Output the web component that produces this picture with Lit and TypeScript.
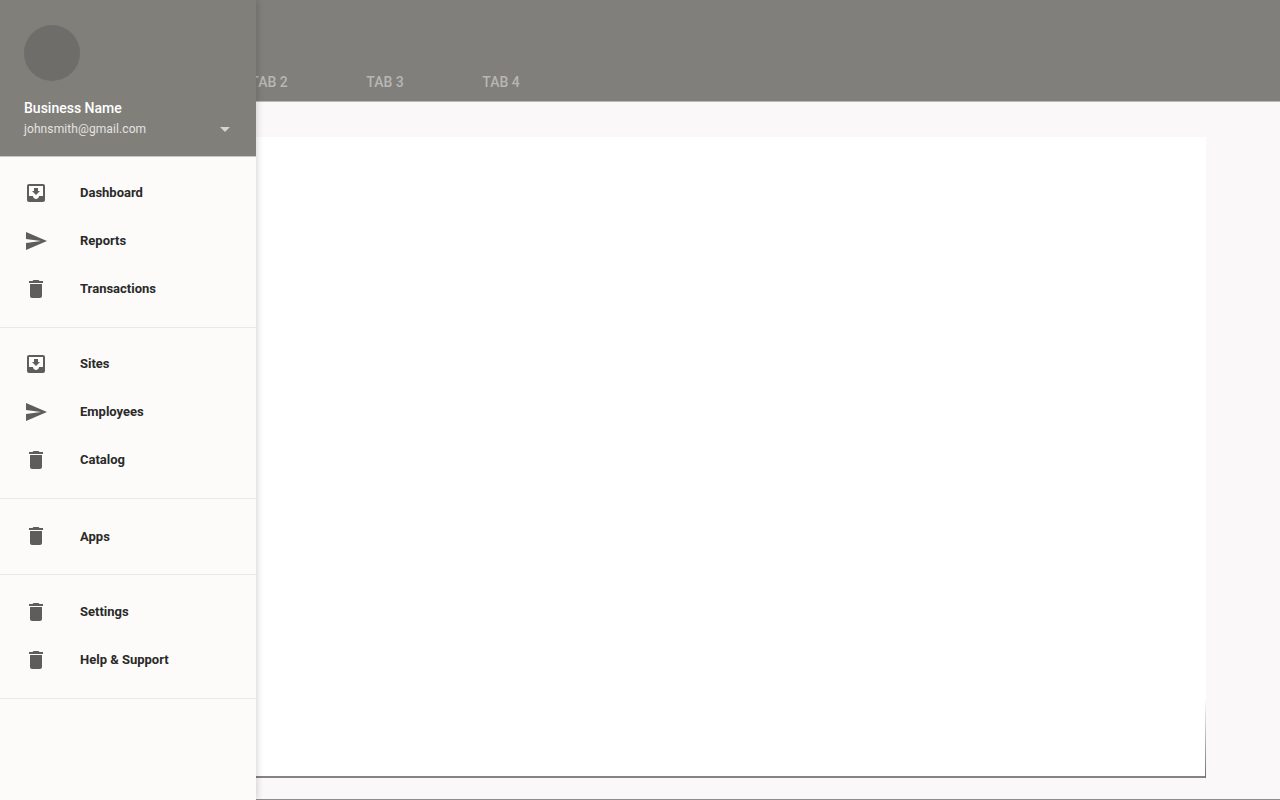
import { LitElement, html, css, svg } from "lit";
import { customElement } from "lit/decorators.js";

const ICONS: Record<string, ReturnType<typeof svg>> = {
  inbox: svg`<path d="M19 3H4.99c-1.11 0-1.98.89-1.98 2L3 19c0 1.1.88 2 1.99 2H19c1.1 0 2-.9 2-2V5c0-1.11-.9-2-2-2zm0 12h-4c0 1.66-1.35 3-3 3s-3-1.34-3-3H4.99V5H19v10zm-3-5h-2V7h-4v3H8l4 4 4-4z"/>`,
  send: svg`<path d="M2.01 21L23 12 2.01 3 2 10l15 2-15 2z"/>`,
  del: svg`<path d="M6 19c0 1.1.9 2 2 2h8c1.1 0 2-.9 2-2V7H6v12zM19 4h-3.5l-1-1h-5l-1 1H5v2h14V4z"/>`,
};

const SECTIONS: { cls: string; items: [string, string][] }[] = [
  { cls: "s1", items: [["inbox", "Dashboard"], ["send", "Reports"], ["del", "Transactions"]] },
  { cls: "s2", items: [["inbox", "Sites"], ["send", "Employees"], ["del", "Catalog"]] },
  { cls: "s3", items: [["del", "Apps"]] },
  { cls: "s4", items: [["del", "Settings"], ["del", "Help & Support"]] },
];

@customElement("app-root")
export class AppRoot extends LitElement {
  static styles = css`
    :host {
      display: block;
      width: 1280px;
      height: 800px;
      position: relative;
      overflow: hidden;
      font-family: Roboto, "Liberation Sans", sans-serif;
      background: #faf8f8;
    }
    .page {
      display: flex;
      flex-direction: column;
      height: 800px;
      box-sizing: border-box;
      border-bottom: 1px solid #8e8d8a;
    }
    .appbar {
      height: 102px;
      flex: none;
      box-sizing: border-box;
      background: #807f7b;
      border-bottom: 1px solid #b9b8b5;
      display: flex;
      align-items: flex-end;
      padding-left: 211px;
    }
    .tab {
      width: 116px;
      height: 39px;
      display: flex;
      justify-content: center;
      align-items: center;
      box-sizing: border-box;
      font-size: 14px;
      font-weight: 500;
      color: #b8b7b3;
    }
    .body {
      flex: 1;
      padding: 35px 74px 21px 74px;
      min-height: 0;
      display: flex;
    }
    .card {
      flex: 1;
      background: #fff;
      position: relative;
      border-bottom: 2px solid #858483;
    }
    .card::after {
      content: "";
      position: absolute;
      right: 0;
      bottom: -2px;
      width: 1px;
      height: 80px;
      background: linear-gradient(to bottom, rgba(110, 110, 110, 0), #6f6e6c);
    }
    .drawer {
      position: absolute;
      left: 0;
      top: 0;
      bottom: 0;
      width: 256px;
      background: #fcfbf9;
      box-shadow: 2px 0 6px rgba(0, 0, 0, 0.14);
      display: flex;
      flex-direction: column;
    }
    .head {
      height: 157px;
      flex: none;
      box-sizing: border-box;
      background: #807f7a;
      border-bottom: 1px solid #c8c7c4;
      padding: 25px 24px 0;
      display: flex;
      flex-direction: column;
    }
    .avatar {
      width: 56px;
      height: 56px;
      border-radius: 50%;
      background: #6e6d69;
      flex: none;
    }
    .name {
      margin-top: 18px;
      font-size: 14px;
      line-height: 18px;
      font-weight: 500;
      color: #fff;
    }
    .mail-row {
      margin-top: 3px;
      display: flex;
      align-items: center;
      justify-content: space-between;
      height: 18px;
    }
    .mail {
      font-size: 12px;
      font-weight: 400;
      line-height: 18px;
      letter-spacing: 0.1px;
      color: #e4e3e1;
    }
    .caret {
      width: 0;
      height: 0;
      margin-right: 2px;
      border-left: 5px solid transparent;
      border-right: 5px solid transparent;
      border-top: 5px solid #d4d3d0;
    }
    .section {
      border-bottom: 1px solid #e9e8e6;
      flex: none;
    }
    .s1 { padding: 12px 0 14px; }
    .s2 { padding: 12px 0 14px; }
    .s3 { padding: 13px 0 14px; }
    .s4 { padding: 13px 0 14px; }
    .item {
      height: 48px;
      display: flex;
      align-items: center;
      padding-left: 24px;
    }
    .item svg {
      width: 24px;
      height: 24px;
      fill: #5e5d5b;
      flex: none;
      margin-right: 32px;
    }
    .item span {
      font-size: 13px;
      font-weight: 700;
      color: #2a2a29;
      padding-bottom: 2px;
    }
    .s3 .item span {
      padding-bottom: 0;
    }
  `;

  render() {
    return html`
      <div class="page">
        <header class="appbar">
          ${["TAB 2", "TAB 3", "TAB 4"].map((t) => html`<div class="tab">${t}</div>`)}
        </header>
        <main class="body"><div class="card"></div></main>
      </div>
      <nav class="drawer">
        <div class="head">
          <div class="avatar"></div>
          <div class="name">Business Name</div>
          <div class="mail-row">
            <span class="mail">johnsmith@gmail.com</span>
            <span class="caret"></span>
          </div>
        </div>
        ${SECTIONS.map(
          (s) => html`<div class="section ${s.cls}">
            ${s.items.map(
              ([icon, label]) => html`<div class="item">
                <svg viewBox="0 0 24 24">${ICONS[icon]}</svg>
                <span>${label}</span>
              </div>`
            )}
          </div>`
        )}
      </nav>
    `;
  }
}
